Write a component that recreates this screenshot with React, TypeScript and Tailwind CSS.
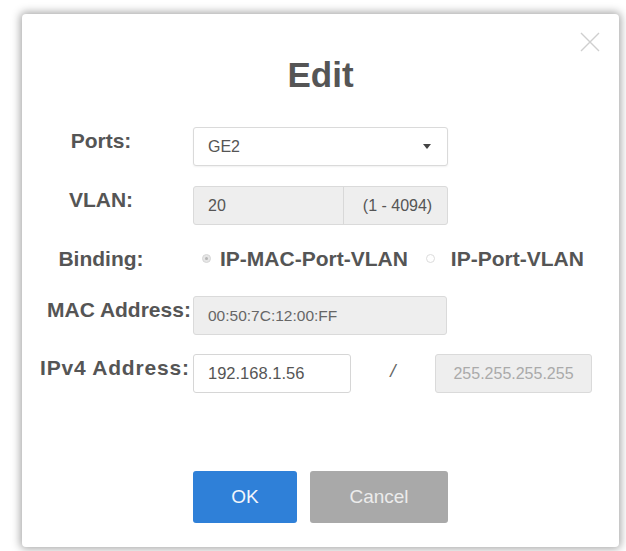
import { useState } from 'react';

const FONT = "font-['Liberation_Sans',Arial,sans-serif]";

function Label({ text, className = '' }: { text: string; className?: string }) {
  return (
    <div
      className={`w-[122px] shrink-0 whitespace-nowrap text-center text-[21px] font-bold leading-[27px] text-[#555] ${className}`}
    >
      {text}
    </div>
  );
}

function Radio({ checked }: { checked: boolean }) {
  return (
    <span
      className={`inline-flex h-[9px] w-[9px] shrink-0 items-center justify-center rounded-full border ${
        checked ? 'border-[#d6d6d6] bg-[#e6e6e6]' : 'border-[#dcdcdc] bg-white'
      }`}
    >
      {checked && <span className="h-[3px] w-[3px] rounded-full bg-[#b5b5b5]" />}
    </span>
  );
}

export default function App() {
  const [binding, setBinding] = useState<'mac' | 'port'>('mac');

  return (
    <div className={`min-h-[551px] w-[626px] bg-white pl-[22px] pt-[14px] ${FONT}`}>
      <div className="relative h-[533px] w-[597px] rounded-[4px] bg-white pt-[40px] shadow-[0_0_8px_2px_rgba(0,0,0,0.34)]">
        <button
          type="button"
          aria-label="Close"
          className="absolute right-[19px] top-[18px] h-[20px] w-[20px] text-[#cfcfcf]"
        >
          <svg viewBox="0 0 20 20" className="h-full w-full" fill="none" stroke="currentColor" strokeWidth="1.4">
            <path d="M1 1 L19 19 M19 1 L1 19" />
          </svg>
        </button>

        <h1 className="h-[41px] text-center text-[35px] font-bold leading-[41px] text-[#555]">Edit</h1>

        {/* Ports */}
        <div className="mt-[32px] flex items-start pl-[18px]">
          <Label text="Ports:" />
          <div className="ml-[31px] flex h-[39px] w-[255px] items-center justify-between rounded-[3px] border border-[#dadada] bg-white pl-[14px] pr-[16px] shadow-[0_1px_2px_rgba(0,0,0,0.06)]">
            <span className="text-[16px] text-[#555]">GE2</span>
            <svg viewBox="0 0 8 5" className="h-[5px] w-[8px]" fill="#444">
              <path d="M0 0 H8 L4 5 Z" />
            </svg>
          </div>
        </div>

        {/* VLAN */}
        <div className="mt-[20px] flex items-start pl-[18px]">
          <Label text="VLAN:" />
          <div className="ml-[31px] flex h-[39px] w-[255px] rounded-[3px] border border-[#dadada] bg-[#eeeeee] text-[16px] text-[#555]">
            <div className="flex w-[150px] items-center border-r border-[#d8d8d8] pl-[14px]">20</div>
            <div className="flex flex-1 items-center justify-center pl-[4px]">(1 - 4094)</div>
          </div>
        </div>

        {/* Binding */}
        <div className="mt-[20px] flex items-center pl-[18px]">
          <Label text="Binding:" />
          <div className="ml-[31px] flex h-[26px] items-center text-[21px] font-bold text-[#555]">
            <button type="button" onClick={() => setBinding('mac')} className="ml-[9px] flex items-center">
              <Radio checked={binding === 'mac'} />
              <span className="ml-[9px]">IP-MAC-Port-VLAN</span>
            </button>
            <button type="button" onClick={() => setBinding('port')} className="ml-[18px] flex items-center">
              <Radio checked={binding === 'port'} />
              <span className="ml-[16px]">IP-Port-VLAN</span>
            </button>
          </div>
        </div>

        {/* MAC */}
        <div className="mt-[24px] flex items-start pl-[18px]">
          <Label text="MAC Address:" className="pl-[7px]" />
          <div className="ml-[31px] flex h-[39px] w-[254px] items-center rounded-[3px] border border-[#dadada] bg-[#eeeeee] pl-[14px] text-[15.5px] text-[#666]">
            00:50:7C:12:00:FF
          </div>
        </div>

        {/* IPv4 */}
        <div className="mt-[19px] flex items-start pl-[18px]">
          <Label text="IPv4 Address:" className="tracking-[0.8px]" />
          <div className="ml-[31px] flex h-[39px] w-[158px] items-center rounded-[3px] border border-[#d6d6d6] bg-white pl-[14px] text-[16.5px] text-[#555]">
            192.168.1.56
          </div>
          <div className="w-[84px] pt-[6px] text-center text-[19px] italic leading-[22px] text-[#666]">/</div>
          <div className="flex h-[39px] w-[157px] items-center justify-center rounded-[3px] border border-[#dadada] bg-[#eeeeee] text-[16px] text-[#aaa]">
            255.255.255.255
          </div>
        </div>

        {/* Buttons */}
        <div className="mt-[78px] flex justify-center gap-[13px]">
          <button
            type="button"
            className="h-[52px] w-[104px] rounded-[3px] bg-[#2f80d8] text-[19px] text-[#f2f6fb]"
          >
            OK
          </button>
          <button
            type="button"
            className="h-[52px] w-[138px] rounded-[3px] bg-[#a9a9a9] text-[19px] text-[#ececec]"
          >
            Cancel
          </button>
        </div>
      </div>
    </div>
  );
}
